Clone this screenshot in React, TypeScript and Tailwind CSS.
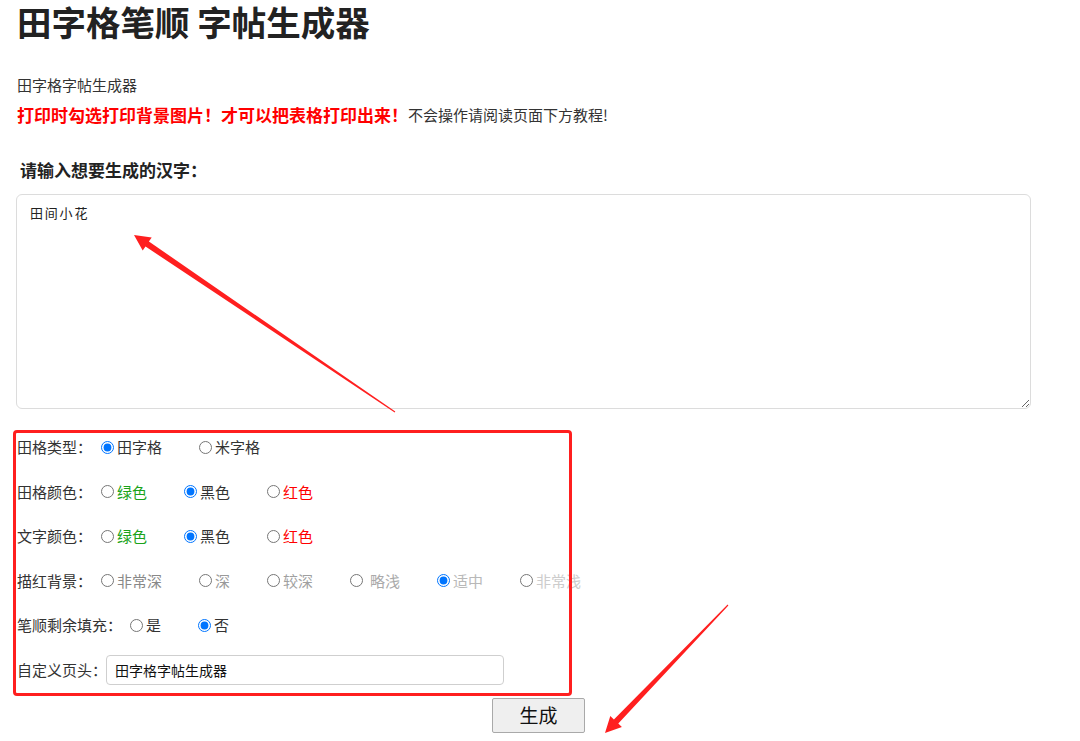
import React from "react";

type Opt = { label: string; color?: string; checked?: boolean; pre?: boolean };

function Row({ title, name, opts, labelGap = 9 }: { title: string; name: string; opts: Opt[]; labelGap?: number }) {
  return (
    <div className="flex h-[44.5px] items-center text-[15px] text-[#333]">
      <span style={{ marginRight: labelGap }}>{title}</span>
      {opts.map((o, i) => (
        <label key={i} className="mr-[37px] flex items-center whitespace-nowrap">
          <input
            type="radio"
            name={name}
            defaultChecked={!!o.checked}
            className="m-0 h-[13px] w-[13px]"
          />
          <span className={o.pre ? "ml-[7px]" : "ml-[3px]"} style={{ color: o.color }}>
            {o.label}
          </span>
        </label>
      ))}
    </div>
  );
}

export default function App() {
  return (
    <div className="relative h-[741px] w-[1080px] overflow-hidden bg-white font-['Noto_Sans_CJK_SC',sans-serif] text-[#333]">
      <div className="pl-[17px]">
        <h1 className="m-0 h-[42px] whitespace-nowrap text-[34.5px] font-bold leading-[42px] text-[#222]">
          田字格笔顺 字帖生成器
        </h1>
        <div className="mt-[33px] flex h-[20px] items-center text-[15px] text-[#333]">田字格字帖生成器</div>
        <div className="mt-[10px] flex h-[20px] items-center whitespace-nowrap">
          <span className="text-[17px] font-bold text-[#ff0000]">打印时勾选打印背景图片！才可以把表格打印出来！</span>
          <span className="text-[15px] text-[#333]">不会操作请阅读页面下方教程!</span>
        </div>
        <div className="ml-[3px] mt-[34px] flex h-[22px] items-center text-[17px] font-bold text-[#222]">
          请输入想要生成的汉字：
        </div>
        <textarea
          defaultValue="田间小花"
          className="-ml-[1px] mt-[13px] block h-[215px] w-[1015px] rounded-[6px] border border-[#dcdcdc] px-[13px] py-[8px] text-[13px] leading-[20px] tracking-[1.8px] text-[#222] outline-none"
        />
        <div className="mt-[16px]">
          <Row
            title="田格类型："
            name="t1"
            opts={[{ label: "田字格", checked: true }, { label: "米字格" }]}
          />
          <Row
            title="田格颜色："
            name="t2"
            opts={[
              { label: "绿色", color: "#1aa31a" },
              { label: "黑色", checked: true },
              { label: "红色", color: "#f00" },
            ]}
          />
          <Row
            title="文字颜色："
            name="t3"
            opts={[
              { label: "绿色", color: "#1aa31a" },
              { label: "黑色", checked: true },
              { label: "红色", color: "#f00" },
            ]}
          />
          <Row
            title="描红背景："
            name="t4"
            opts={[
              { label: "非常深", color: "#888" },
              { label: "深", color: "#999" },
              { label: "较深", color: "#a0a0a0" },
              { label: "略浅", color: "#aaa", pre: true },
              { label: "适中", color: "#b8b8b8", checked: true },
              { label: "非常浅", color: "#ccc" },
            ]}
          />
          <Row
            title="笔顺剩余填充："
            name="t5"
            labelGap={8}
            opts={[{ label: "是" }, { label: "否", checked: true }]}
          />
          <div className="flex h-[44.5px] items-center text-[15px] text-[#333]">
            <span>自定义页头：</span>
            <input
              type="text"
              defaultValue="田字格字帖生成器"
              className="-ml-[1px] h-[30px] w-[398px] rounded-[4px] border border-[#cfcfcf] pl-[8px] text-[14px] text-[#111] outline-none"
            />
          </div>
        </div>
        <button className="ml-[475px] mt-[6px] flex h-[35px] w-[93px] items-center justify-center rounded-[2px] border border-[#a9a9a9] bg-[#efefef] text-[19px] text-[#111]">
          生成
        </button>
      </div>

      {/* annotation box */}
      <div className="pointer-events-none absolute left-[13px] top-[430px] h-[266px] w-[559px] rounded-[4px] border-[3px] border-[#ff1f1f]" />

      {/* annotation arrows */}
      <svg className="pointer-events-none absolute left-0 top-0" width="1080" height="741" viewBox="0 0 1080 741">
        <polygon
          fill="#ff1f1f"
          points="134,235 151.7,237.4 148.9,241.5 395.3,411.6 394.7,412.4 145.5,246.5 142.7,250.6"
        />
        <polygon
          fill="#ff1f1f"
          points="605,733 621.9,727 618.3,723.6 728.4,605.4 727.6,604.6 613.9,719.4 610.3,716"
        />
      </svg>
    </div>
  );
}
